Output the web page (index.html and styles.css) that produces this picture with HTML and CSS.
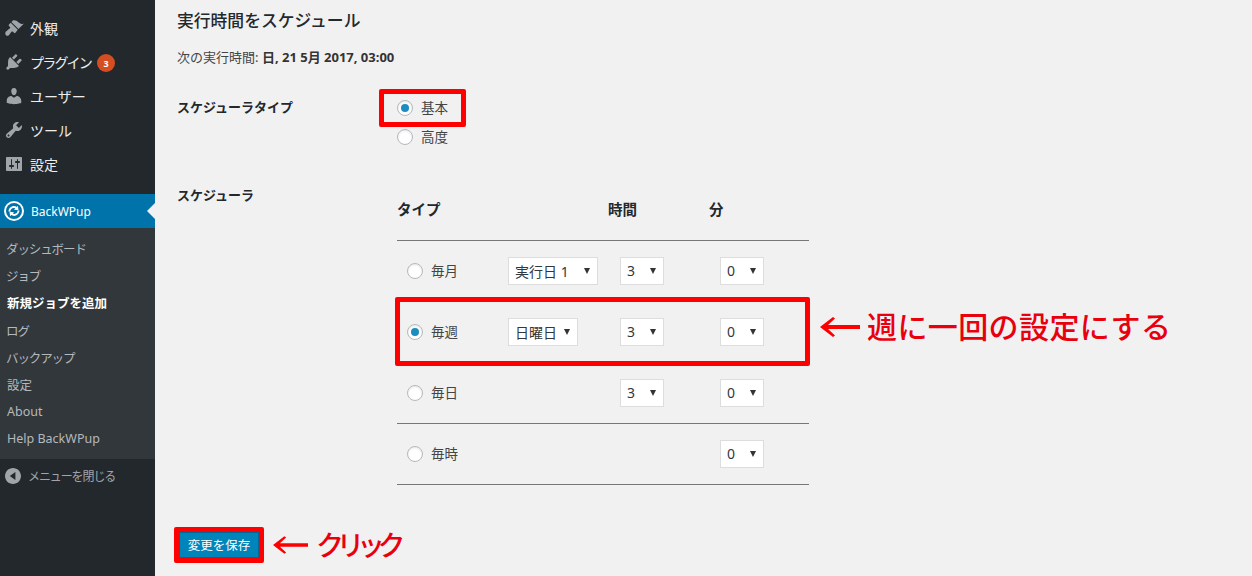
FILE: index.html
```html
<!DOCTYPE html>
<html lang="ja">
<head>
    <meta charset="UTF-8">
    <meta name="viewport" content="width=device-width, initial-scale=1.0">
    <title>BackWPup ジョブ設定</title>
    <link rel="stylesheet" href="styles.css">
</head>
<body>
    <nav class="sidebar">
        <ul class="menu">
            <li class="menu-item">
                <svg class="menu-icon" viewBox="0 0 20 20"><path d="M14.48 11.06L7.41 3.99l1.5-1.5c.5-.56 2.3-.47 3.51.32 1.21.8 1.43 1.28 2.91 2.1 1.18.64 2.45 1.26 4.45.85zm-.71.71L6.7 4.7 4.93 6.47c-.39.39-.39 1.02 0 1.41l1.06 1.06c.39.39.39 1.03 0 1.42-.6.6-1.43 1.11-2.21 1.69-.35.26-.7.53-1.01.84C1.43 13.23.98 15.13 1.5 16.5c.52 1.37 2.2 1.9 3.5.5.31-.31.58-.66.84-1.01.58-.78 1.09-1.61 1.69-2.21.39-.39 1.03-.39 1.42 0l1.06 1.06c.39.39 1.02.39 1.41 0z"/></svg>
                外観
            </li>
            <li class="menu-item">
                <svg class="menu-icon" viewBox="0 0 20 20"><path d="M13.11 4.36L9.87 7.6 8 5.73l3.24-3.24c.35-.34 1.05-.2 1.56.32.52.51.66 1.21.31 1.55zm-8 1.77l.91-1.12 9.01 9.01-1.19.84c-.71.71-2.63 1.16-3.82 1.16H6.14L4.9 17.26c-.59.59-1.54.59-2.12 0-.59-.58-.59-1.53 0-2.12l1.24-1.24v-3.88c0-1.13.4-3.19 1.09-3.89zm7.26 3.97l3.24-3.24c.34-.35 1.04-.21 1.55.31.52.51.66 1.21.31 1.55l-3.24 3.25z"/></svg>
                <span class="kana-tight">プラグイン</span>
                <span class="badge">3</span>
            </li>
            <li class="menu-item">
                <svg class="menu-icon" viewBox="0 0 20 20"><path d="M10 9.25c-2.27 0-2.73-3.44-2.73-3.44C7 4.02 7.82 2 9.97 2c2.16 0 2.98 2.02 2.71 3.81 0 0-.41 3.44-2.68 3.44zm0 2.57L12.72 10c2.39 0 4.52 2.33 4.52 4.53v2.49s-3.65 1.13-7.24 1.13c-3.65 0-7.24-1.13-7.24-1.13v-2.49c0-2.25 1.94-4.48 4.47-4.48z"/></svg>
                ユーザー
            </li>
            <li class="menu-item">
                <svg class="menu-icon" viewBox="0 0 20 20"><path d="M16.68 9.77c-1.34 1.34-3.3 1.67-4.95.99l-5.41 6.52c-.99.99-2.59.99-3.58 0s-.99-2.59 0-3.57l6.52-5.42c-.68-1.65-.35-3.61.99-4.95 1.28-1.28 3.12-1.62 4.72-1.06l-2.89 2.89 2.82 2.82 2.86-2.87c.53 1.58.18 3.39-1.08 4.65zM3.81 16.21c.4.39 1.04.39 1.43 0 .4-.4.4-1.04 0-1.43-.39-.4-1.03-.4-1.43 0-.39.39-.39 1.03 0 1.43z"/></svg>
                ツール
            </li>
            <li class="menu-item">
                <svg class="menu-icon" viewBox="0 0 20 20"><path d="M18 16V4c0-.55-.45-1-1-1H3c-.55 0-1 .45-1 1v12c0 .55.45 1 1 1h14c.55 0 1-.45 1-1zM8 11h1c.55 0 1 .45 1 1s-.45 1-1 1H8v1.5c0 .28-.22.5-.5.5s-.5-.22-.5-.5V13H6c-.55 0-1-.45-1-1s.45-1 1-1h1V5.5c0-.28.22-.5.5-.5s.5.22.5.5V11zm5-2h-1c-.55 0-1-.45-1-1s.45-1 1-1h1V5.5c0-.28.22-.5.5-.5s.5.22.5.5V7h1c.55 0 1 .45 1 1s-.45 1-1 1h-1v5.5c0 .28-.22.5-.5.5s-.5-.22-.5-.5V9z"/></svg>
                設定
            </li>
        </ul>

        <div class="menu-item menu-current">
            <svg class="menu-icon logo-icon" viewBox="0 0 20 20">
                <circle cx="10" cy="10" r="10" fill="#fff"/>
                <circle cx="10" cy="10" r="8" fill="#0073aa"/>
                <path fill="#fff" d="M4.500 10.400c.2-3 2.600-5.300 5.500-5.300 1 0 2 .3 2.800.8l1.100-1.100.6 4.500-4.500-.6 1.200-1.200c-.5-.3-1.100-.4-1.700-.4-1.700 0-3 1.300-3.200 3.300zM15.500 9.600c-.2 3-2.600 5.300-5.500 5.300-1 0-2-.3-2.800-.8L6.100 15.200l-.6-4.500 4.500.6-1.200 1.200c.5.300 1.100.4 1.700.4 1.700 0 3-1.300 3.200-3.300z"/>
            </svg>
            <span class="brand-name">BackWPup</span>
        </div>
        <ul class="submenu">
            <li class="kana-tight">ダッシュボード</li>
            <li class="kana-tight">ジョブ</li>
            <li class="submenu-current">新規ジョブを追加</li>
            <li class="kana-tight">ログ</li>
            <li class="kana-tight">バックアップ</li>
            <li>設定</li>
            <li>About</li>
            <li>Help BackWPup</li>
        </ul>

        <div class="collapse">
            <svg class="collapse-icon" viewBox="0 0 20 20"><path d="M10 20c5.500 0 10-4.500 10-10S15.500 0 10 0 0 4.500 0 10s4.500 10 10 10zm3-15v10L6 10z"/></svg>
            メニューを閉じる
        </div>
    </nav>

    <main class="content">
        <h3 class="section-title">実行時間をスケジュール</h3>
        <p class="next-run">次の実行時間: <strong>日, 21 5月 2017, 03:00</strong></p>

        <div class="form-row type-row">
            <div class="form-label">スケジューラタイプ</div>
            <div class="type-options">
                <label class="option"><input type="radio" name="schedule-type" checked> 基本</label>
                <label class="option"><input type="radio" name="schedule-type"> 高度</label>
            </div>
        </div>

        <div class="form-row">
            <div class="form-label schedule-label">スケジューラ</div>
            <table class="schedule-table">
                <colgroup>
                    <col class="col-type">
                    <col class="col-day">
                    <col class="col-hour">
                    <col class="col-min">
                </colgroup>
                <thead>
                    <tr>
                        <th colspan="4">
                            <div class="table-head">
                                <span class="head-type">タイプ</span>
                                <span class="head-hour">時間</span>
                                <span>分</span>
                            </div>
                        </th>
                    </tr>
                </thead>
                <tbody>
                    <tr>
                        <td class="cell-type"><label class="option"><input type="radio" name="period"> 毎月</label></td>
                        <td><div class="select select-wide">実行日 1<span class="caret"></span></div></td>
                        <td><div class="select">3<span class="caret"></span></div></td>
                        <td><div class="select">0<span class="caret"></span></div></td>
                    </tr>
                    <tr>
                        <td class="cell-type"><label class="option"><input type="radio" name="period" checked> 毎週</label></td>
                        <td><div class="select select-mid">日曜日<span class="caret"></span></div></td>
                        <td><div class="select">3<span class="caret"></span></div></td>
                        <td><div class="select">0<span class="caret"></span></div></td>
                    </tr>
                    <tr>
                        <td class="cell-type"><label class="option"><input type="radio" name="period"> 毎日</label></td>
                        <td></td>
                        <td><div class="select">3<span class="caret"></span></div></td>
                        <td><div class="select">0<span class="caret"></span></div></td>
                    </tr>
                    <tr>
                        <td class="cell-type"><label class="option"><input type="radio" name="period"> 毎時</label></td>
                        <td></td>
                        <td></td>
                        <td><div class="select">0<span class="caret"></span></div></td>
                    </tr>
                </tbody>
            </table>
        </div>

        <button class="save-button" type="submit">変更を保存</button>
    </main>

    <!-- screenshot annotations drawn over the page -->
    <div class="mark mark-type"></div>
    <div class="mark mark-week"></div>
    <div class="mark mark-save"></div>

    <div class="note note-week">
        <svg class="note-arrow" viewBox="0 0 40 24"><path d="M0 12L13 2l2 1.500L8 10h32v4H8l7 6.500L13 22z"/></svg>
        週に一回の設定にする
    </div>
    <div class="note note-save">
        <svg class="note-arrow" viewBox="0 0 40 24"><path d="M0 12L13 2l2 1.500L8 10h32v4H8l7 6.500L13 22z"/></svg>
        クリック
    </div>
</body>
</html>
```

FILE: styles.css
```css
* {
    box-sizing: border-box;
}

html, body {
    height: 100%;
}

body {
    display: flex;
    position: relative;
    margin: 0;
    overflow: hidden;
    background-color: #f1f1f1;
    color: #444;
    font-family: "Noto Sans", "Noto Sans CJK JP", sans-serif;
    font-size: 13px;
}

ul {
    margin: 0;
    padding: 0;
    list-style: none;
}

/* sidebar */

.sidebar {
    flex: 0 0 155px;
    padding-top: 12px;
    background-color: #23282d;
    color: #eee;
}

.menu {
    margin-bottom: 12px;
}

.menu-item {
    display: flex;
    align-items: center;
    height: 34px;
    padding: 0 0 2px 4px;
    font-size: 14px;
}

.menu-icon {
    flex: 0 0 20px;
    width: 20px;
    height: 20px;
    margin-right: 6px;
    fill: #a0a5aa;
}

.kana-tight {
    letter-spacing: -1.1px;
}

.menu-item .kana-tight {
    letter-spacing: -1.8px;
}

.badge {
    display: flex;
    align-items: center;
    justify-content: center;
    width: 18px;
    height: 18px;
    margin: 2px 0 0 6px;
    border-radius: 50%;
    background-color: #d54e21;
    color: #fff;
    font-size: 9px;
    font-weight: 700;
}

.menu-current {
    position: relative;
    padding-bottom: 0;
    background-color: #0073aa;
    color: #fff;
}

.menu-current::after {
    content: "";
    position: absolute;
    top: 9px;
    right: 0;
    border: 8px solid transparent;
    border-right-color: #f1f1f1;
}

.brand-name {
    margin-left: 1px;
    font-size: 12px;
}

.submenu {
    height: 231px;
    padding-top: 7px;
    background-color: #32373c;
    color: #b4b9be;
    font-size: 12.5px;
}

.submenu li {
    display: flex;
    align-items: center;
    height: 27.2px;
    padding-left: 7px;
}

.submenu .kana-tight {
    padding-left: 6px;
}

.submenu-current {
    color: #fff;
    font-weight: 700;
}

.collapse {
    display: flex;
    align-items: center;
    height: 34px;
    padding-left: 5px;
    color: #a0a5aa;
    font-size: 12px;
    letter-spacing: -1.1px;
}

.collapse-icon {
    width: 16px;
    height: 16px;
    margin-right: 7px;
    fill: #a0a5aa;
}

/* main form */

.content {
    flex: 1;
    padding: 11px 22px 0;
}

.section-title {
    margin: 0 0 17px;
    color: #23282d;
    font-size: 16.8px;
    font-weight: 500;
    line-height: 20px;
}

.next-run {
    margin: 0 0 26px;
    font-size: 13px;
    line-height: 18px;
}

.next-run strong {
    color: #333;
    font-weight: 700;
}

.form-row {
    display: flex;
}

.type-row {
    margin-bottom: 29px;
}

.form-label {
    flex: 0 0 220px;
    padding-top: 5px;
    color: #23282d;
    font-size: 13px;
    font-weight: 600;
    line-height: 20px;
}

.type-options {
    padding-top: 1px;
}

.type-options .option {
    height: 29px;
}

.option {
    display: flex;
    align-items: center;
    gap: 8px;
    font-size: 13.5px;
    line-height: 18px;
}

input[type="radio"] {
    appearance: none;
    display: flex;
    align-items: center;
    justify-content: center;
    width: 16px;
    height: 16px;
    margin: 0;
    border: 1px solid #b4b9be;
    border-radius: 50%;
    background-color: #fff;
    box-shadow: inset 0 1px 2px rgba(0, 0, 0, 0.1);
}

input[type="radio"]:checked::before {
    content: "";
    width: 8px;
    height: 8px;
    border-radius: 50%;
    background-color: #1e8cbe;
}

.schedule-table {
    width: 412px;
    border-collapse: collapse;
    table-layout: fixed;
}

.col-type {
    width: 111px;
}

.col-day {
    width: 112px;
}

.col-hour {
    width: 100px;
}

.col-min {
    width: 89px;
}

.schedule-table th {
    height: 60px;
    padding: 0 0 2px;
    border-bottom: 1px solid #777;
    color: #23282d;
    font-size: 14.5px;
    font-weight: 600;
    text-align: left;
}

.table-head {
    display: flex;
}

.head-type {
    width: 211px;
}

.head-hour {
    width: 101px;
}

.schedule-table td {
    height: 61px;
    padding: 0;
    border-bottom: 1px solid #777;
}

.schedule-table .cell-type {
    padding-left: 10px;
}

.select {
    display: flex;
    align-items: center;
    justify-content: space-between;
    width: 44px;
    height: 28px;
    padding: 0 7px 0 6px;
    border: 1px solid #ddd;
    background-color: #fff;
    color: #32373c;
    font-size: 14px;
}

.select-wide {
    width: 90px;
}

.select-mid {
    width: 70px;
}

.caret {
    border-top: 6px solid #333;
    border-left: 3px solid transparent;
    border-right: 3px solid transparent;
}

.save-button {
    display: block;
    width: 80px;
    height: 26px;
    margin: 47px 0 0 2px;
    padding: 0;
    border: 1px solid #006799;
    background-color: #0085ba;
    color: #fff;
    font-family: inherit;
    font-size: 12.5px;
}

/* red annotations on top of the screenshot */

.mark {
    position: absolute;
    border: 5px solid #f00;
    border-radius: 2px;
}

.mark-type {
    top: 89px;
    left: 379px;
    width: 87px;
    height: 38px;
}

.mark-week {
    top: 297px;
    left: 395px;
    width: 415px;
    height: 69px;
}

.mark-save {
    top: 527px;
    left: 174px;
    width: 90px;
    height: 36px;
}

.note {
    position: absolute;
    display: flex;
    align-items: center;
    color: #e8000f;
    font-size: 30px;
    font-weight: 500;
    line-height: 40px;
    white-space: nowrap;
}

.note-arrow {
    width: 40px;
    height: 24px;
    margin-right: 7px;
    fill: #f00;
}

.note-week {
    top: 307px;
    left: 820px;
    letter-spacing: 0.4px;
}

.note-save {
    top: 525px;
    left: 273px;
    font-size: 28px;
    letter-spacing: -7.5px;
}

.note-save .note-arrow {
    width: 35px;
    margin-right: 8px;
}
```
